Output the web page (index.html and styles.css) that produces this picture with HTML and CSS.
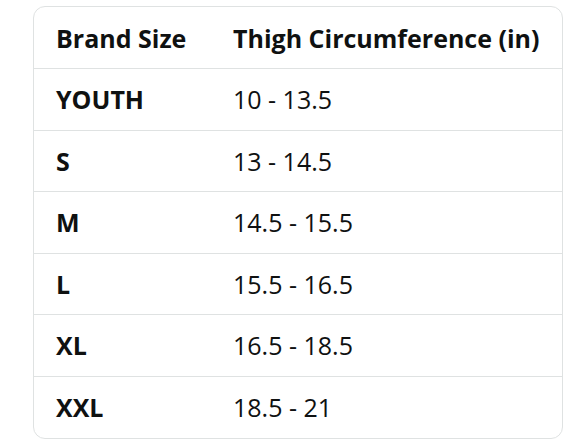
FILE: index.html
```html
<!DOCTYPE html>
<html>
<head>
<meta charset="utf-8">
<link rel="stylesheet" href="styles.css">
</head>
<body>
<div class="card">
  <table class="sizes">
    <thead>
      <tr><th>Brand Size</th><th>Thigh Circumference (in)</th></tr>
    </thead>
    <tbody>
      <tr><th>YOUTH</th><td>10 - 13.5</td></tr>
      <tr><th>S</th><td>13 - 14.5</td></tr>
      <tr><th>M</th><td>14.5 - 15.5</td></tr>
      <tr><th>L</th><td>15.5 - 16.5</td></tr>
      <tr><th>XL</th><td>16.5 - 18.5</td></tr>
      <tr><th>XXL</th><td>18.5 - 21</td></tr>
    </tbody>
  </table>
</div>
</body>
</html>
```
FILE: styles.css
```css
html, body { margin: 0; padding: 0; background: #ffffff; }
body { padding: 6px 0 0 33px; font-family: "Open Sans", "Noto Sans", sans-serif; color: #0f1111; }
.card {
  width: 528px;
  border: 1px solid #dfe2e2;
  border-radius: 12px;
  overflow: hidden;
}
.sizes { width: 100%; border-collapse: collapse; }
.sizes th, .sizes td {
  height: 61.5px;
  padding: 0 0 0 22px;
  text-align: left;
  vertical-align: middle;
  font-size: 25px;
  line-height: 30px;
  white-space: nowrap;
  box-sizing: border-box;
}
.sizes th { font-weight: 700; }
.sizes td { font-weight: 400; }
.sizes tr > :first-child { width: 177px; }
.sizes tbody tr { border-top: 1px solid #dfe2e2; }
```
